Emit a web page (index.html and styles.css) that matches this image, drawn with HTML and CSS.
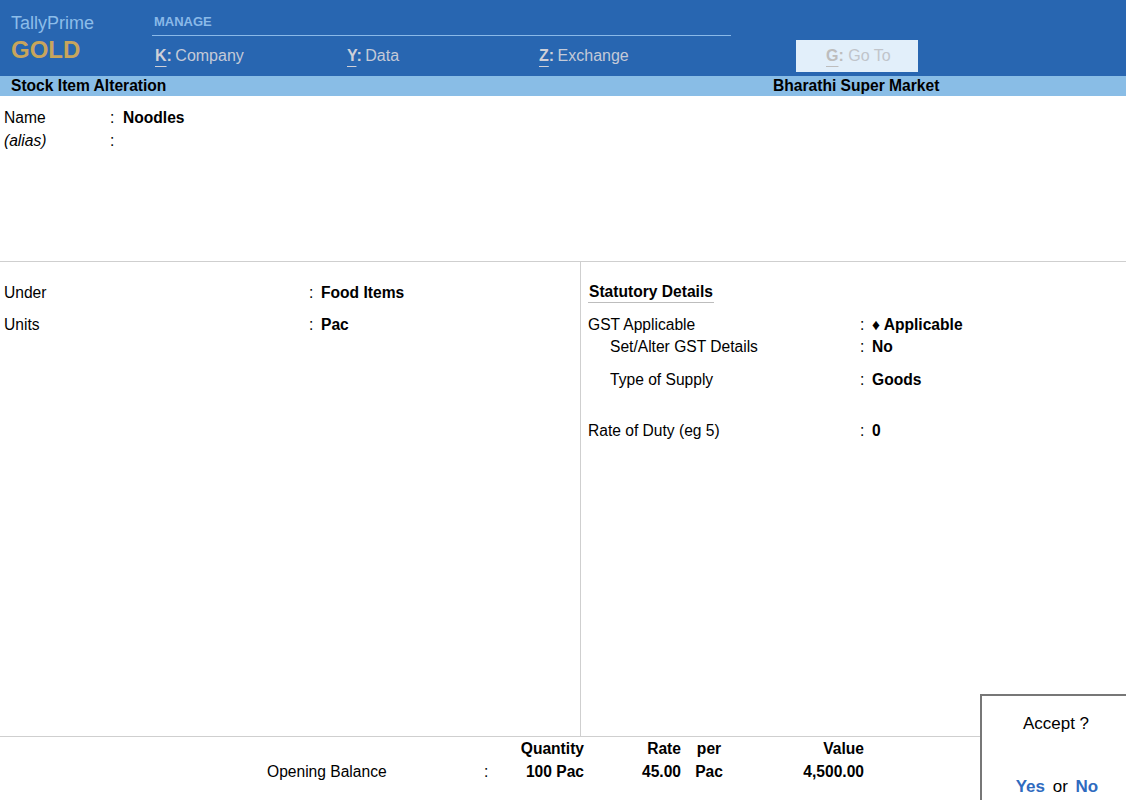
FILE: index.html
```html
<!DOCTYPE html>
<html>
<head>
<meta charset="utf-8">
<link rel="stylesheet" href="styles.css">
</head>
<body>
<div class="page">
  <header class="topbar">
    <div class="brand">
      <div class="brand-name">TallyPrime</div>
      <div class="brand-edition">GOLD</div>
    </div>
    <div class="menu">
      <div class="menu-title">MANAGE</div>
      <div class="menu-items">
        <div class="menu-item"><span class="key">K</span><span class="colon">:</span> Company</div>
        <div class="menu-item"><span class="key">Y</span><span class="colon">:</span> Data</div>
        <div class="menu-item"><span class="key">Z</span><span class="colon">:</span> Exchange</div>
      </div>
    </div>
    <div class="goto"><span class="key">G</span><span class="colon">:</span> Go To</div>
  </header>
  <div class="titlebar">
    <div class="title-left">Stock Item Alteration</div>
    <div class="title-right">Bharathi Super Market</div>
  </div>
  <section class="names">
    <div class="name-row"><span class="lbl">Name</span><span class="sep">:</span><span class="val">Noodles</span></div>
    <div class="name-row"><span class="lbl italic">(alias)</span><span class="sep">:</span><span class="val"></span></div>
  </section>
  <section class="main">
    <div class="left">
      <div class="lrow"><span class="lbl">Under</span><span class="sep">:</span><span class="val">Food Items</span></div>
      <div class="lrow units"><span class="lbl">Units</span><span class="sep">:</span><span class="val">Pac</span></div>
    </div>
    <div class="right">
      <div class="stat-head"><span class="stat-title">Statutory Details</span></div>
      <div class="rrow gst"><span class="lbl">GST Applicable</span><span class="sep">:</span><span class="val">&#9830; Applicable</span></div>
      <div class="rrow setalter"><span class="lbl indent">Set/Alter GST Details</span><span class="sep">:</span><span class="val">No</span></div>
      <div class="rrow supply"><span class="lbl indent">Type of Supply</span><span class="sep">:</span><span class="val">Goods</span></div>
      <div class="rrow duty"><span class="lbl">Rate of Duty (eg 5)</span><span class="sep">:</span><span class="val">0</span></div>
    </div>
  </section>
  <footer class="footer">
    <div class="fgrid">
      <span></span><span></span>
      <span class="fh r">Quantity</span>
      <span class="fh r">Rate</span>
      <span class="fh c">per</span>
      <span class="fh r">Value</span>
      <span class="flbl">Opening Balance</span>
      <span class="fsep">:</span>
      <span class="fv r">100 Pac</span>
      <span class="fv r">45.00</span>
      <span class="fv c">Pac</span>
      <span class="fv r">4,500.00</span>
    </div>
  </footer>
  <div class="accept">
    <div class="accept-q">Accept ?</div>
    <div class="accept-a"><span class="opt">Yes</span> or <span class="opt">No</span></div>
  </div>
</div>
</body>
</html>
```
FILE: styles.css
```css
* { box-sizing: border-box; }
html, body { margin: 0; padding: 0; }
body {
  font-family: "Liberation Sans", Arial, sans-serif;
  font-size: 15.6px;
  color: #000;
  background: #fff;
}
.page {
  position: relative;
  width: 1126px;
  height: 800px;
  overflow: hidden;
}
.topbar {
  height: 76px;
  background: #2866b1;
  display: flex;
  align-items: flex-start;
}
.brand {
  width: 152px;
  padding-left: 11px;
  padding-top: 13px;
}
.brand-name {
  font-size: 18px;
  line-height: 20px;
  color: #8cbde9;
}
.brand-edition {
  font-size: 24px;
  font-weight: bold;
  line-height: 28px;
  margin-top: 3px;
  color: #c8a55c;
}
.menu {
  width: 579px;
}
.menu-title {
  height: 36px;
  padding-left: 2px;
  padding-top: 14px;
  font-size: 13px;
  line-height: 15px;
  font-weight: bold;
  color: #8ab9e8;
  border-bottom: 1px solid #8ab9e8;
}
.menu-items {
  display: flex;
  padding-top: 10px;
  padding-left: 3px;
}
.menu-item {
  width: 193px;
  font-size: 16px;
  line-height: 20px;
  color: #c4cad8;
  word-spacing: -1px;
}
.key {
  font-weight: bold;
  color: #cfd0d8;
  text-decoration: underline;
  text-underline-offset: 5px;
  text-decoration-thickness: 1px;
}
.colon {
  font-weight: bold;
  color: #cfd0d8;
}
.goto {
  margin-left: 65px;
  margin-top: 40px;
  width: 122px;
  height: 32px;
  background: #e2effa;
  color: #c0c4ca;
  font-size: 16px;
  line-height: 32px;
  padding-left: 30px;
}
.goto .key, .goto .colon { color: #bdbdbd; }
.titlebar {
  height: 20px;
  background: #89bde6;
  display: flex;
  font-weight: bold;
  line-height: 20px;
}
.title-left { padding-left: 11px; width: 773px; }
.names {
  height: 166px;
  border-bottom: 1px solid #cfcfcf;
  padding-top: 10px;
  padding-left: 4px;
}
.name-row {
  display: flex;
  line-height: 23px;
}
.name-row .lbl { width: 106px; }
.name-row .sep { width: 13px; }
.italic { font-style: italic; }
.val { font-weight: bold; }
.main {
  display: flex;
  height: 474px;
}
.left {
  width: 581px;
  border-right: 1px solid #cfcfcf;
  padding-top: 20px;
  padding-left: 4px;
}
.lrow {
  display: flex;
  line-height: 22px;
}
.lrow .lbl { width: 305px; }
.lrow .sep { width: 12px; }
.lrow.units { margin-top: 10px; }
.right {
  flex: 1;
  padding-left: 7px;
  padding-top: 19px;
}
.stat-head { line-height: 22px; }
.stat-title {
  display: inline-block;
  font-weight: bold;
  padding-left: 1px;
  padding-right: 1px;
  line-height: 21px;
  border-bottom: 1px solid #bdbdbd;
}
.rrow {
  display: flex;
  line-height: 22px;
}
.rrow .lbl { width: 272px; }
.rrow .lbl.indent { padding-left: 22px; }
.rrow .sep { width: 12px; }
.rrow.gst { margin-top: 11px; }
.rrow.supply { margin-top: 11px; }
.rrow.duty { margin-top: 29px; }
.footer {
  height: 64px;
  border-top: 1px solid #cfcfcf;
  padding-left: 267px;
  padding-top: 0;
}
.fgrid {
  display: grid;
  grid-template-columns: 217px 12px 88px 97px 56px 127px;
  grid-auto-rows: 23px;
  line-height: 23px;
}
.fh, .fv { font-weight: bold; }
.r { text-align: right; }
.c { text-align: center; }
.accept {
  position: absolute;
  left: 980px;
  top: 694px;
  right: 0;
  bottom: 0;
  background: #fff;
  border-top: 2px solid #777;
  border-left: 2px solid #777;
  text-align: center;
  font-size: 17px;
}
.accept-q {
  margin-top: 17px;
  line-height: 22px;
  padding-left: 4px;
}
.accept-a {
  margin-top: 41px;
  line-height: 22px;
  padding-left: 6px;
  word-spacing: 3px;
}
.opt {
  font-weight: bold;
  color: #2f6bbf;
}
```
